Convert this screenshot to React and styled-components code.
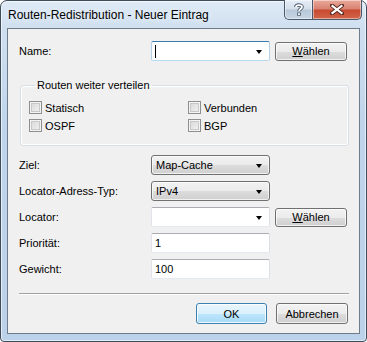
import styled, { createGlobalStyle } from "styled-components";

const Global = createGlobalStyle`
  html, body { margin: 0; padding: 0; background: #ffffff; }
  body { font-family: "Liberation Sans", Arial, sans-serif; font-size: 11px; color: #000; }
`;

const Window = styled.div`
  box-sizing: border-box;
  width: 367px;
  height: 342px;
  border: 1px solid #3f4c5a;
  border-radius: 7px 7px 4px 4px;
  background: linear-gradient(180deg, #dfeaf6 0px, #cfdff0 28px, #c0d5eb 120px, #bcd2ea 100%);
  box-shadow: inset 0 0 0 1px rgba(255,255,255,0.6);
  display: flex;
  flex-direction: column;
`;

const TitleBar = styled.div`
  height: 27px;
  display: flex;
  justify-content: space-between;
  align-items: flex-start;
`;

const Title = styled.div`
  padding: 7px 0 0 7px;
  font-size: 12px;
  color: #000;
  text-shadow: 0 0 6px rgba(255,255,255,0.9);
`;

const Caption = styled.div`
  display: flex;
  margin-right: 4px;
  margin-top: -1px;
`;

const CapButton = styled.div`
  box-sizing: border-box;
  width: ${p => p.$w}px;
  height: 20px;
  border: 1px solid #4a5868;
  border-top: none;
  display: flex;
  align-items: center;
  justify-content: center;
  box-shadow: inset 0 0 0 1px rgba(255,255,255,0.45);
  background: ${p => p.$close
    ? "linear-gradient(180deg, #e9a99a 0%, #d98373 45%, #c84a30 55%, #d0664c 100%)"
    : "linear-gradient(180deg, #e6eef7 0%, #d4dfeb 45%, #b9c9da 55%, #c6d4e3 100%)"};
  border-radius: ${p => p.$close ? "0 0 5px 0" : "0 0 0 5px"};
  border-left: ${p => p.$close ? "none" : "1px solid #4a5868"};
`;

const Client = styled.div`
  box-sizing: border-box;
  margin: 0 6px 0 6px;
  height: 306px;
  background: #f0f0f0;
  border: 1px solid #6d7b8a;
  padding: 12px 11px 0 11px;
  display: flex;
  flex-direction: column;
`;

const Row = styled.div`
  display: grid;
  grid-template-columns: 127px 119px 72px;
  column-gap: 5px;
  align-items: center;
  height: 20px;
  margin-top: ${p => p.$mt ?? 6}px;
`;

const Label = styled.span`
  white-space: nowrap;
`;

const Edit = styled.div`
  box-sizing: border-box;
  height: ${p => p.$h ?? 20}px;
  background: #fff;
  border: 1px solid;
  border-color: ${p => p.$focus ? "#3d7bad #b5cfe7 #b7d9ed #b5cfe7" : "#abadb3 #dbdfe6 #e3e9ef #e2e3ea"};
  border-radius: 2px;
  display: flex;
  align-items: center;
  padding-left: 3px;
  position: relative;
`;

const Caret = styled.span`
  display: block;
  width: 1px;
  height: 13px;
  background: #000;
`;

const Arrow = styled.span`
  position: absolute;
  right: 7px;
  top: 50%;
  margin-top: -1px;
  width: 0;
  height: 0;
  border-left: 3.5px solid transparent;
  border-right: 3.5px solid transparent;
  border-top: 4px solid #000;
`;

const Dropdown = styled.div`
  box-sizing: border-box;
  height: 20px;
  border: 1px solid #707070;
  border-radius: 3px;
  background: linear-gradient(180deg, #f2f2f2 0%, #ebebeb 50%, #dddddd 51%, #cfcfcf 100%);
  box-shadow: inset 0 0 0 1px rgba(255,255,255,0.7);
  display: flex;
  align-items: center;
  padding-left: 4px;
  position: relative;
`;

const Button = styled.div`
  box-sizing: border-box;
  width: ${p => p.$w ?? 72}px;
  height: ${p => p.$h ?? 19}px;
  border: 1px solid ${p => p.$default ? "#3c7fb1" : "#707070"};
  border-radius: 3px;
  background: ${p => p.$default
    ? "linear-gradient(180deg, #eaf6fd 0%, #d9f0fc 50%, #bee6fd 51%, #a7d9f5 100%)"
    : "linear-gradient(180deg, #f2f2f2 0%, #ebebeb 50%, #dddddd 51%, #cfcfcf 100%)"};
  box-shadow: inset 0 0 0 1px ${p => p.$default ? "rgba(255,255,255,0.8)" : "rgba(255,255,255,0.7)"};
  display: flex;
  align-items: center;
  justify-content: center;
`;

const Group = styled.fieldset`
  margin: 17px 0 0 1px;
  width: 329px;
  box-sizing: border-box;
  border: 1px solid #d5dfe5;
  border-radius: 3px;
  box-shadow: inset 0 0 0 1px #fff;
  padding: 9px 0 13px 8px;
  display: grid;
  grid-template-columns: 159px 150px;
  row-gap: 5px;
`;

const Legend = styled.legend`
  padding: 0 2px;
  margin-left: 6px;
  line-height: 14px;
`;

const Check = styled.label`
  display: flex;
  align-items: center;
  gap: 3px;
  height: 13px;
`;

const Box = styled.span`
  box-sizing: border-box;
  width: 13px;
  height: 13px;
  border: 1px solid #8e8f8f;
  background: linear-gradient(135deg, #d6d6d6 0%, #f4f4f4 100%);
  box-shadow: inset 0 0 0 1px #f4f4f4, inset 0 0 0 2px #c8c8c8;
`;

const Separator = styled.div`
  margin-top: 14px;
  width: 330px;
  height: 1px;
  background: #a0a0a0;
  border-bottom: 1px solid #ffffff;
`;

const Footer = styled.div`
  display: flex;
  justify-content: flex-end;
  gap: 9px;
  margin-top: 8px;
`;

function CloseGlyph() {
  return (
    <svg width="14" height="11" viewBox="0 0 14 11">
      <path d="M2 1.5 L12 9.5 M12 1.5 L2 9.5" stroke="#5a2a22" strokeWidth="4" strokeLinecap="square" />
      <path d="M2.5 2 L11.5 9 M11.5 2 L2.5 9" stroke="#ffffff" strokeWidth="2.2" strokeLinecap="square" />
    </svg>
  );
}

function HelpGlyph() {
  return (
    <svg width="10" height="13" viewBox="0 0 10 13">
      <path d="M2 4 C2 1.5 8 1.5 8 4 C8 6 5 6 5 8.2" fill="none" stroke="#4d5c6d" strokeWidth="3.6" />
      <rect x="3.2" y="9.5" width="3.6" height="3.2" fill="#4d5c6d" />
      <path d="M2 4 C2 1.5 8 1.5 8 4 C8 6 5 6 5 8.2" fill="none" stroke="#ffffff" strokeWidth="1.8" />
      <rect x="4.1" y="10.2" width="1.8" height="1.8" fill="#ffffff" />
    </svg>
  );
}

const Waehlen = () => (
  <Button><span><u>W</u>ählen</span></Button>
);

export default function App() {
  return (
    <>
      <Global />
      <Window>
        <TitleBar>
          <Title>Routen-Redistribution - Neuer Eintrag</Title>
          <Caption>
            <CapButton $w={29}><HelpGlyph /></CapButton>
            <CapButton $w={49} $close><CloseGlyph /></CapButton>
          </Caption>
        </TitleBar>
        <Client>
          <Row $mt={0}>
            <Label>Name:</Label>
            <Edit $focus><Caret /><Arrow /></Edit>
            <Waehlen />
          </Row>

          <Group>
            <Legend>Routen weiter verteilen</Legend>
            <Check><Box />Statisch</Check>
            <Check><Box />Verbunden</Check>
            <Check><Box />OSPF</Check>
            <Check><Box />BGP</Check>
          </Group>

          <Row $mt={9}>
            <Label>Ziel:</Label>
            <Dropdown>Map-Cache<Arrow /></Dropdown>
          </Row>
          <Row>
            <Label>Locator-Adress-Typ:</Label>
            <Dropdown>IPv4<Arrow /></Dropdown>
          </Row>
          <Row>
            <Label>Locator:</Label>
            <Edit><Arrow /></Edit>
            <Waehlen />
          </Row>
          <Row>
            <Label>Priorität:</Label>
            <Edit>1</Edit>
          </Row>
          <Row>
            <Label>Gewicht:</Label>
            <Edit>100</Edit>
          </Row>

          <Separator />

          <Footer>
            <Button $default $w={71} $h={21}>OK</Button>
            <Button $h={21}>Abbrechen</Button>
          </Footer>
        </Client>
      </Window>
    </>
  );
}
